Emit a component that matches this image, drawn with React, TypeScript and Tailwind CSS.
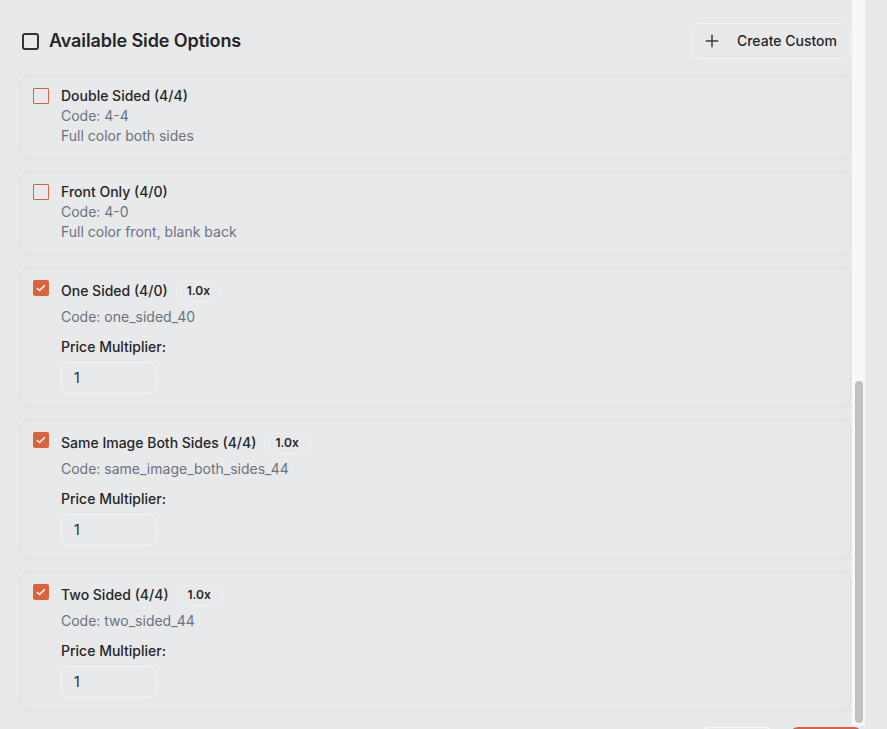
import React from 'react';

const options = [
  { name: "Double Sided (4/4)", code: "4-4", desc: "Full color both sides", selected: false },
  { name: "Front Only (4/0)", code: "4-0", desc: "Full color front, blank back", selected: false },
  { name: "One Sided (4/0)", code: "one_sided_40", multiplier: "1", selected: true },
  { name: "Same Image Both Sides (4/4)", code: "same_image_both_sides_44", multiplier: "1", selected: true },
  { name: "Two Sided (4/4)", code: "two_sided_44", multiplier: "1", selected: true },
];

const CheckBox = ({ checked }: { checked: boolean }) =>
  checked ? (
    <div className="w-4 h-4 shrink-0 bg-[#d9633a] rounded-[2px] flex items-center justify-center">
      <svg width="16" height="16" viewBox="0 0 16 16" fill="none">
        <path d="M4.3 8.4 L6.6 10.6 L11.6 5.6" stroke="#ffffff" strokeWidth="1.4" strokeLinecap="round" strokeLinejoin="round" />
      </svg>
    </div>
  ) : (
    <div className="w-4 h-4 shrink-0 mt-0.5 border-[1.5px] border-[#d9633a] rounded-[1px]" />
  );

export default function App() {
  return (
    <div className="w-[887px] h-[729px] overflow-hidden bg-[#e8e9eb] font-['Inter',sans-serif] text-[#262626] flex flex-col">
      <div className="h-[726px] flex shrink-0">
        <div className="w-[852px] pl-5 pr-[1px] pt-[23px]">
          <div className="flex items-center justify-between mb-4">
            <div className="flex items-center gap-[10px] pl-[2px]">
              <div className="w-[17px] h-[17px] border-2 border-[#333333] rounded-[3px]" />
              <h2 className="text-lg font-semibold tracking-[-0.1px]">Available Side Options</h2>
            </div>
            <button className="h-[36px] pl-2.5 pr-[13px] flex items-center rounded-lg border border-[#f3f3f4] text-sm font-medium text-[#262626]">
              <svg width="20" height="20" viewBox="0 0 24 24" fill="none" stroke="#3a3a3a" strokeWidth="1.8" strokeLinecap="round" className="mr-[15px]">
                <path d="M5 12h14" />
                <path d="M12 5v14" />
              </svg>
              Create Custom
            </button>
          </div>

          <div className="flex flex-col gap-3">
            {options.map((opt, i) => (
              <div
                key={i}
                className={`border border-[#dcdde0] rounded-[10px] px-3 flex items-start gap-3 ${opt.selected ? 'pt-3 pb-3' : 'pt-2.5 pb-3'}`}
              >
                <CheckBox checked={opt.selected} />
                <div className="flex flex-col">
                  {opt.selected ? (
                    <>
                      <div className="h-[22px] flex items-center gap-2">
                        <span className="text-sm font-medium">{opt.name}</span>
                        <span className="h-[21px] px-2.5 flex items-center rounded-full border border-[#f1f1f3] text-xs font-semibold">1.0x</span>
                      </div>
                      <p className="mt-[5px] text-sm text-[#6b7280]">Code: {opt.code}</p>
                      <label className="mt-2.5 text-sm font-medium">Price Multiplier:</label>
                      <div className="mt-[5px] w-24 h-8 rounded-lg border border-[#f4f4f5] flex items-center pl-3 text-sm">
                        {opt.multiplier}
                      </div>
                    </>
                  ) : (
                    <>
                      <span className="text-sm font-medium">{opt.name}</span>
                      <p className="text-sm text-[#6b7280]">Code: {opt.code}</p>
                      <p className="text-sm text-[#6b7280]">{opt.desc}</p>
                    </>
                  )}
                </div>
              </div>
            ))}
          </div>
        </div>

        {/* scrollbar */}
        <div className="w-[13px] h-full bg-[#f8f8f8] flex flex-col pt-[381px] pb-[3px] pl-[3px] pr-[2px]">
          <div className="flex-1 rounded-full bg-[#c1c1c1]" />
        </div>
      </div>

      <div className="flex justify-end gap-[17px] pr-[25px] pt-[1px]">
        <div className="w-[72px] h-9 rounded-lg border border-[#fafafa] bg-[#e8e9eb]" />
        <div className="w-[72px] h-9 rounded-lg bg-[#d9633a]" />
      </div>
    </div>
  );
}
